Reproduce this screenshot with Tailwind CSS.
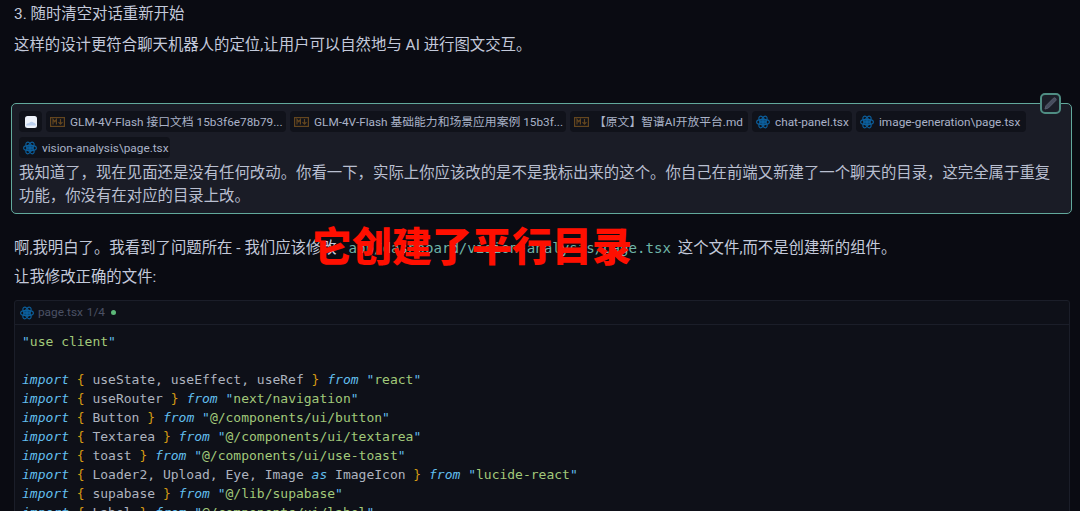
<!DOCTYPE html>
<html lang="zh">
<head>
  <meta charset="UTF-8" />
  <title>对话</title>
  <script src="https://cdn.jsdelivr.net/npm/@tailwindcss/browser@4"></script>
</head>
<body class="bg-[#0a0b12] font-['Roboto','Noto_Sans_CJK_SC',sans-serif] text-[#c3c9da]">
  <div class="relative h-[511px] w-[1080px] overflow-hidden">
    <div class="px-[14px]">
      <p class="flex h-[26px] items-center pt-[3px] text-[15.4px]">3. 随时清空对话重新开始</p>
      <p class="mt-[5px] flex h-[26px] items-center pt-[3px] text-[15.4px]">这样的设计更符合聊天机器人的定位,让用户可以自然地与 AI 进行图文交互。</p>
    </div>

    <div class="relative ml-[11px] mr-[8px] mt-[46px] h-[111px] rounded-[5px] border border-[#62a99c] bg-[#1a1c26] px-[7px] pt-[7px]">
      <button class="absolute -top-[11px] right-[10px] flex h-[21px] w-[21px] items-center justify-center rounded-[5px] border-2 border-[#4f8d83] bg-[#1b1e28]">
        <svg viewBox="0 0 16 16" class="h-[15px] w-[15px]" fill="#474d5e" stroke="#5a6070" stroke-width="1"><path d="M11.200 2.300a1.800 1.800 0 0 1 2.500 2.500l-8 8-3.600 1.100 1.100-3.600z"/></svg>
      </button>

      <div class="flex flex-wrap gap-x-[4px] gap-y-[5px] text-[11.8px] text-[#aab2c8]">
        <span class="flex h-[21px] w-[23px] items-center justify-center rounded-[4px] bg-[#10121a]">
          <svg viewBox="0 0 12 12" class="h-[12px] w-[12px]"><rect width="12" height="12" rx="2.500" fill="#eef2fa"/><path d="M1 9.500c.5-2 2-2.500 3-2 .8-1.800 3.500-2.300 4.800-.7.800-.3 2 .5 2.200 2.700z" fill="#bcd0ee"/></svg>
        </span>
        <span class="flex h-[21px] w-[240px] items-center gap-[5px] rounded-[4px] bg-[#10121a] pl-[4px]">
          <svg viewBox="0 0 15 10" class="h-[10px] w-[15px] shrink-0" fill="none" stroke="#64461f" stroke-width="1.200"><rect x=".6" y=".6" width="13.800" height="8.800"/><path d="M3 7.500v-5l1.700 2.200 1.700-2.200v5M10.500 2v5M8.500 5.200l2 2 2-2"/></svg>
          <span class="whitespace-nowrap pt-[3px]">GLM-4V-Flash 接口文档 15b3f6e78b79...</span>
        </span>
        <span class="flex h-[21px] w-[276px] items-center gap-[5px] rounded-[4px] bg-[#10121a] pl-[4px]">
          <svg viewBox="0 0 15 10" class="h-[10px] w-[15px] shrink-0" fill="none" stroke="#64461f" stroke-width="1.200"><rect x=".6" y=".6" width="13.800" height="8.800"/><path d="M3 7.500v-5l1.700 2.200 1.700-2.200v5M10.500 2v5M8.500 5.200l2 2 2-2"/></svg>
          <span class="whitespace-nowrap pt-[3px]">GLM-4V-Flash 基础能力和场景应用案例 15b3f...</span>
        </span>
        <span class="flex h-[21px] w-[178px] items-center gap-[5px] rounded-[4px] bg-[#10121a] pl-[4px]">
          <svg viewBox="0 0 15 10" class="h-[10px] w-[15px] shrink-0" fill="none" stroke="#64461f" stroke-width="1.200"><rect x=".6" y=".6" width="13.800" height="8.800"/><path d="M3 7.500v-5l1.700 2.200 1.700-2.200v5M10.500 2v5M8.500 5.200l2 2 2-2"/></svg>
          <span class="whitespace-nowrap pt-[3px]">【原文】智谱AI开放平台.md</span>
        </span>
        <span class="flex h-[21px] w-[100px] items-center gap-[5px] rounded-[4px] bg-[#10121a] pl-[4px]">
          <svg viewBox="-12 -12 24 24" class="h-[14px] w-[14px] shrink-0" fill="none" stroke="#0c5f9c" stroke-width="2"><circle r="2.500" fill="#0c5f9c"/><ellipse rx="11" ry="4.500"/><ellipse rx="11" ry="4.500" transform="rotate(60)"/><ellipse rx="11" ry="4.500" transform="rotate(120)"/></svg>
          <span class="whitespace-nowrap pt-[3px]">chat-panel.tsx</span>
        </span>
        <span class="flex h-[21px] w-[170px] items-center gap-[5px] rounded-[4px] bg-[#10121a] pl-[4px]">
          <svg viewBox="-12 -12 24 24" class="h-[14px] w-[14px] shrink-0" fill="none" stroke="#0c5f9c" stroke-width="2"><circle r="2.500" fill="#0c5f9c"/><ellipse rx="11" ry="4.500"/><ellipse rx="11" ry="4.500" transform="rotate(60)"/><ellipse rx="11" ry="4.500" transform="rotate(120)"/></svg>
          <span class="whitespace-nowrap pt-[3px]">image-generation\page.tsx</span>
        </span>
        <span class="flex h-[21px] w-[151px] items-center gap-[5px] rounded-[4px] bg-[#10121a] pl-[4px]">
          <svg viewBox="-12 -12 24 24" class="h-[14px] w-[14px] shrink-0" fill="none" stroke="#0c5f9c" stroke-width="2"><circle r="2.500" fill="#0c5f9c"/><ellipse rx="11" ry="4.500"/><ellipse rx="11" ry="4.500" transform="rotate(60)"/><ellipse rx="11" ry="4.500" transform="rotate(120)"/></svg>
          <span class="whitespace-nowrap pt-[3px]">vision-analysis\page.tsx</span>
        </span>
      </div>

      <p class="mt-[4px] text-[15.4px] leading-[23px] text-[#b9bfd0]">我知道了，现在见面还是没有任何改动。你看一下，实际上你应该改的是不是我标出来的这个。你自己在前端又新建了一个聊天的目录，这完全属于重复功能，你没有在对应的目录上改。</p>
    </div>

    <div class="px-[14px]">
      <p class="mt-[20px] flex h-[26px] items-center whitespace-pre pt-[3px] text-[15.4px]">啊,我明白了。我看到了问题所在 - 我们应该修改 <code class="ml-[8px] mr-[3px] font-['DejaVu_Sans_Mono',monospace] text-[14.1px] text-[#6fb5a8]">app/dashboard/vision-analysis/page.tsx</code> 这个文件,而不是创建新的组件。</p>
      <p class="mt-[3px] flex h-[26px] items-center pt-[3px] text-[15.4px]">让我修改正确的文件:</p>

      <div class="mr-[-4px] mt-[11px] h-[300px] rounded-[3px] border border-[#1b1e29] bg-[#0e1018]">
        <div class="flex h-[24px] items-center gap-[4px] border-b border-[#1b1e29] pl-[5px] text-[11.8px] text-[#4b5164]">
          <svg viewBox="-12 -12 24 24" class="h-[14px] w-[14px] shrink-0" fill="none" stroke="#0c5f9c" stroke-width="2"><circle r="2.500" fill="#0c5f9c"/><ellipse rx="11" ry="4.500"/><ellipse rx="11" ry="4.500" transform="rotate(60)"/><ellipse rx="11" ry="4.500" transform="rotate(120)"/></svg>
          <span class="pt-[1px]">page.tsx</span>
          <span class="pt-[1px]">1/4</span>
          <span class="ml-[2px] h-[5px] w-[5px] rounded-full bg-[#5cb878]"></span>
        </div>
        <pre class="pl-[7px] pt-[7px] font-['DejaVu_Sans_Mono',monospace] text-[13px] leading-[19px] text-[#adb3bf]"><span class="text-[#62bfee]">"</span><span class="text-[#a2c97a]">use client</span><span class="text-[#62bfee]">"</span>

<i class="text-[#62bfee]">import</i> <span class="text-[#d49a14]">{</span> useState, useEffect, useRef <span class="text-[#d49a14]">}</span> <i class="text-[#62bfee]">from</i> <span class="text-[#62bfee]">"</span><span class="text-[#a2c97a]">react</span><span class="text-[#62bfee]">"</span>
<i class="text-[#62bfee]">import</i> <span class="text-[#d49a14]">{</span> useRouter <span class="text-[#d49a14]">}</span> <i class="text-[#62bfee]">from</i> <span class="text-[#62bfee]">"</span><span class="text-[#a2c97a]">next/navigation</span><span class="text-[#62bfee]">"</span>
<i class="text-[#62bfee]">import</i> <span class="text-[#d49a14]">{</span> Button <span class="text-[#d49a14]">}</span> <i class="text-[#62bfee]">from</i> <span class="text-[#62bfee]">"</span><span class="text-[#a2c97a]">@/components/ui/button</span><span class="text-[#62bfee]">"</span>
<i class="text-[#62bfee]">import</i> <span class="text-[#d49a14]">{</span> Textarea <span class="text-[#d49a14]">}</span> <i class="text-[#62bfee]">from</i> <span class="text-[#62bfee]">"</span><span class="text-[#a2c97a]">@/components/ui/textarea</span><span class="text-[#62bfee]">"</span>
<i class="text-[#62bfee]">import</i> <span class="text-[#d49a14]">{</span> toast <span class="text-[#d49a14]">}</span> <i class="text-[#62bfee]">from</i> <span class="text-[#62bfee]">"</span><span class="text-[#a2c97a]">@/components/ui/use-toast</span><span class="text-[#62bfee]">"</span>
<i class="text-[#62bfee]">import</i> <span class="text-[#d49a14]">{</span> Loader2, Upload, Eye, Image <i class="text-[#62bfee]">as</i> ImageIcon <span class="text-[#d49a14]">}</span> <i class="text-[#62bfee]">from</i> <span class="text-[#62bfee]">"</span><span class="text-[#a2c97a]">lucide-react</span><span class="text-[#62bfee]">"</span>
<i class="text-[#62bfee]">import</i> <span class="text-[#d49a14]">{</span> supabase <span class="text-[#d49a14]">}</span> <i class="text-[#62bfee]">from</i> <span class="text-[#62bfee]">"</span><span class="text-[#a2c97a]">@/lib/supabase</span><span class="text-[#62bfee]">"</span>
<i class="text-[#62bfee]">import</i> <span class="text-[#d49a14]">{</span> Label <span class="text-[#d49a14]">}</span> <i class="text-[#62bfee]">from</i> <span class="text-[#62bfee]">"</span><span class="text-[#a2c97a]">@/components/ui/label</span><span class="text-[#62bfee]">"</span></pre>
      </div>
    </div>

    <div class="absolute left-[312px] top-[219px] whitespace-nowrap font-['Noto_Sans_CJK_SC',sans-serif] text-[40px] leading-[50px] font-black text-[#ff0f00]">它创建了平行目录</div>
  </div>
</body>
</html>
